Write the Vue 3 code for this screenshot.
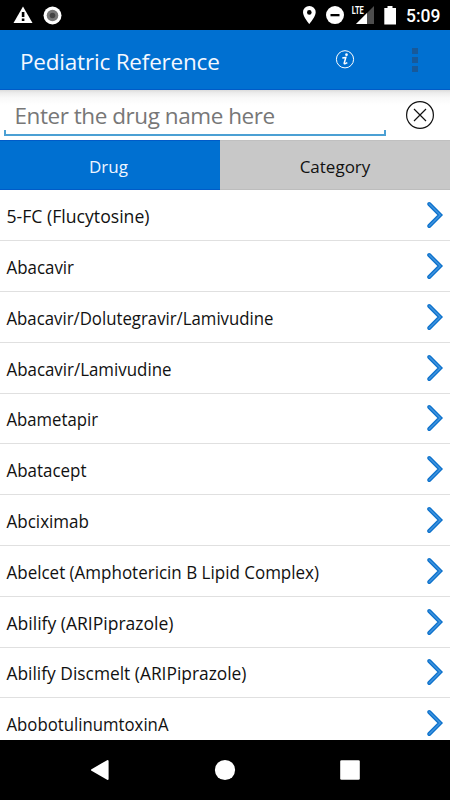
<template>
  <div class="screen">
    <div class="status-bar">
      <div class="status-left">
        <svg width="20" height="18" viewBox="0 0 20 18">
          <path d="M10 0.5 19.5 17H0.5Z" fill="#fff" />
          <path d="M8.8 6h2.6v5H8.8zM8.8 12.6h2.6V15H8.8z" fill="#000" />
        </svg>
        <svg width="19" height="19" viewBox="0 0 19 19">
          <circle cx="9.5" cy="9.5" r="9" fill="#fff" />
          <circle cx="9.5" cy="9.5" r="5.8" fill="#777" />
          <circle cx="9.5" cy="9.5" r="2.8" fill="#444" />
        </svg>
      </div>
      <svg class="status-right" width="100" height="20" viewBox="0 0 100 20">
        <path d="M9.3 1A6.3 6.3 0 0 0 3 7.3C3 12 9.3 19 9.3 19S15.7 12 15.7 7.3A6.3 6.3 0 0 0 9.3 1Z" fill="#fff" />
        <circle cx="9.3" cy="7.4" r="2.3" fill="#000" />
        <circle cx="35" cy="10.1" r="9" fill="#fff" />
        <path d="M30.5 9h9v2.3h-9z" fill="#000" />
        <path d="M74 1V19H56Z" fill="#4d4d4d" />
        <path d="M67 8V19H56Z" fill="#fff" />
        <path d="M51 0H64V9H51Z" fill="#000" />
        <text x="51.7" y="9" class="lte" textLength="12" lengthAdjust="spacingAndGlyphs">LTE</text>
        <path d="M87.5 1h5v2H96v16.5H84.3V3h3.2Z" fill="#fff" />
      </svg>
      <span class="clock">5:09</span>
    </div>

    <div class="app-bar">
      <h1 class="title">Pediatric Reference</h1>
      <svg class="info" width="20" height="20" viewBox="0 0 20 20">
        <circle cx="10" cy="9.3" r="8.6" fill="none" stroke="#fff" stroke-width="1" />
        <circle cx="11.5" cy="4.7" r="1.35" fill="#fff" />
        <path d="M7.3 8 10.8 7.4 9.2 13.2Q9 14.6 12.3 12.6" fill="none" stroke="#fff" stroke-width="1.5" />
      </svg>
      <div class="dots"><i></i><i></i><i></i></div>
    </div>

    <div class="search">
      <div class="field">
        <input v-model="query" class="search-input" type="text" placeholder="Enter the drug name here" />
      </div>
      <svg class="clear" width="30" height="30" viewBox="0 0 30 30" @click="query = ''">
        <circle cx="15" cy="15" r="13.4" fill="none" stroke="#111" stroke-width="1.2" />
        <path d="M9 9 21 21M21 9 9 21" stroke="#111" stroke-width="1.2" />
      </svg>
    </div>

    <div class="tabs">
      <div class="tab drug" @click="activeTab = 'drug'" :class="{ active: activeTab === 'drug' }"><span>Drug</span></div>
      <div class="tab category" @click="activeTab = 'category'" :class="{ active: activeTab === 'category' }"><span>Category</span></div>
    </div>

    <div class="list">
      <div v-for="drug in drugs" :key="drug.name" class="row">
        <svg class="name" :width="drug.width + 2" height="26">
          <text x="0.5" y="21" :textLength="drug.width" lengthAdjust="spacingAndGlyphs">{{ drug.name }}</text>
        </svg>
        <svg class="chevron" width="18" height="28" viewBox="0 0 18 28">
          <path d="M3.2 3 14.2 14 3.2 25" fill="none" stroke="#0d72cc" stroke-width="4" stroke-linecap="round" />
          <path d="M3.2 3 14.2 14 3.2 25" fill="none" stroke="#3f93de" stroke-width="1.5" stroke-linecap="round" />
        </svg>
      </div>
    </div>

    <div class="nav-bar">
      <svg width="20" height="22" viewBox="0 0 20 22">
        <path d="M2 11 17.6 2V20Z" fill="#fff" stroke="#fff" stroke-width="2" stroke-linejoin="round" />
      </svg>
      <svg width="22" height="22" viewBox="0 0 22 22">
        <circle cx="11" cy="11" r="10.1" fill="#fff" />
      </svg>
      <svg width="20" height="20" viewBox="0 0 20 20">
        <rect x="0.2" y="0.2" width="19.6" height="19.6" rx="1.3" fill="#fff" />
      </svg>
    </div>
  </div>
</template>

<script setup>
import { ref } from 'vue';

const query = ref('');
const activeTab = ref('drug');

// width: label width in px
const drugs = ref([
  { name: '5-FC (Flucytosine)', width: 143 },
  { name: 'Abacavir', width: 67.5 },
  { name: 'Abacavir/Dolutegravir/Lamivudine', width: 267 },
  { name: 'Abacavir/Lamivudine', width: 165 },
  { name: 'Abametapir', width: 91.5 },
  { name: 'Abatacept', width: 80 },
  { name: 'Abciximab', width: 82.5 },
  { name: 'Abelcet (Amphotericin B Lipid Complex)', width: 312.5 },
  { name: 'Abilify (ARIPiprazole)', width: 167 },
  { name: 'Abilify Discmelt (ARIPiprazole)', width: 240 },
  { name: 'AbobotulinumtoxinA', width: 162 }
]);
</script>

<style>
body {
  margin: 0;
  overflow: hidden;
}
</style>

<style scoped>
.screen {
  width: 450px;
  height: 800px;
  display: flex;
  flex-direction: column;
  background: #fff;
  color: #111;
  overflow: hidden;
  font-family: "Open Sans", "Noto Sans", sans-serif;
}
.status-bar {
  height: 30px;
  flex: none;
  background: #000;
  display: flex;
  align-items: center;
}
.status-left {
  display: flex;
  align-items: center;
  gap: 9.5px;
  padding-left: 13px;
}
.status-right {
  margin-left: auto;
}
.lte {
  font-family: Roboto, sans-serif;
  font-size: 10px;
  font-weight: 700;
  fill: #fff;
}
.clock {
  width: 34px;
  margin: 1px 10px 0 6px;
  color: #fff;
  font-family: Roboto, sans-serif;
  font-size: 17.5px;
  font-weight: 500;
  line-height: 20px;
  white-space: nowrap;
}
.app-bar {
  height: 60px;
  flex: none;
  box-sizing: border-box;
  background: #0070d1;
  border-bottom: 1px solid #005bc8;
  display: flex;
  align-items: center;
}
.title {
  margin: 4px 0 0;
  padding-left: 20px;
  width: 315px;
  box-sizing: border-box;
  font-size: 22.5px;
  font-weight: 400;
  letter-spacing: -0.2px;
  color: #f4f8ff;
}
.info {
  margin-left: 20px;
}
.dots {
  margin: 1px 0 0 57px;
  display: flex;
  flex-direction: column;
  gap: 3.2px;
}
.dots i {
  width: 6px;
  height: 6px;
  background: #17599a;
}
.search {
  height: 50px;
  flex: none;
  display: flex;
  align-items: center;
  background: linear-gradient(#dcdcdc 0, #ededed 3px, #f9f9f9 8px, #fff 15px);
}
.field {
  width: 382px;
  height: 50px;
  margin-left: 4px;
  box-sizing: border-box;
  padding-bottom: 4px;
  display: flex;
  flex-direction: column;
}
/* underline with small upturned ends */
.field::after {
  content: '';
  height: 6px;
  flex: none;
  box-sizing: border-box;
  border: 2px solid #4ba0d4;
  border-top: 0;
}
.search-input {
  flex: 1;
  min-height: 0;
  border: 0;
  outline: 0;
  background: transparent;
  padding: 11px 0 0 10.5px;
  font-family: inherit;
  font-size: 22.5px;
  letter-spacing: -0.45px;
}
.search-input::placeholder {
  color: #777;
  opacity: 1;
}
.clear {
  margin-left: 19px;
}
.tabs {
  height: 50px;
  flex: none;
  display: flex;
}
.tab {
  display: flex;
  align-items: center;
  justify-content: center;
  box-sizing: border-box;
  padding-top: 3px;
  font-size: 17px;
  background: #c8c8c8;
  border-top: 1px solid #c0c0c0;
  border-bottom: 1px solid #bdbdbd;
}
.tab.drug {
  width: 220px;
  padding-right: 3px;
}
.tab.category {
  width: 230px;
}
.tab.active {
  background: #0070d1;
  border-color: #005bc8;
  color: #eef5ff;
}
.list {
  flex: 1;
  min-height: 0;
  padding-top: 0.4px;
  overflow: hidden;
}
.row {
  height: 50.8px;
  box-sizing: border-box;
  border-bottom: 1px solid #e0e0e0;
  padding: 0 6px 0 6px;
  display: flex;
  align-items: center;
  justify-content: space-between;
}
.name {
  font-size: 17.3px;
  fill: #111;
  overflow: visible;
}
.nav-bar {
  height: 60px;
  flex: none;
  background: #000;
  display: flex;
  align-items: center;
  justify-content: space-between;
  padding: 0 90px;
}
</style>
